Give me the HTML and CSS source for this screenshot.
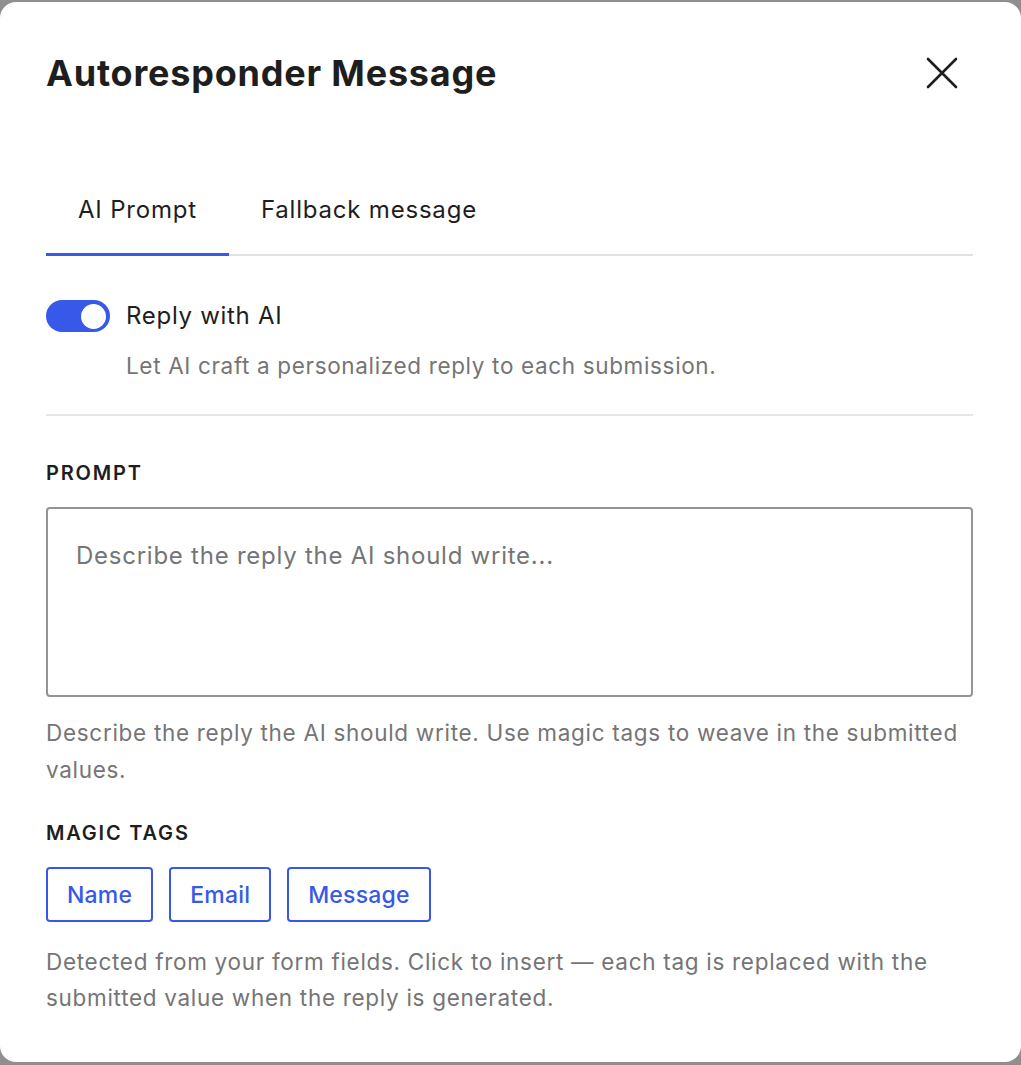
FILE: index.html
```html
<!DOCTYPE html>
<html lang="en">
<head>
<meta charset="utf-8">
<title>Autoresponder Message</title>
<link rel="stylesheet" href="styles.css">
</head>
<body>
<div class="modal" role="dialog" aria-labelledby="modal-title">
  <div class="modal-header">
    <h1 id="modal-title" class="modal-title">Autoresponder Message</h1>
    <button class="close-btn" aria-label="Close">
      <svg width="34" height="34" viewBox="0 0 34 34" aria-hidden="true">
        <path d="M3 3 L31 31 M31 3 L3 31" stroke="#1e1e1e" stroke-width="2.6" stroke-linecap="round" fill="none"/>
      </svg>
    </button>
  </div>

  <div class="tabs" role="tablist">
    <button class="tab is-active" role="tab" aria-selected="true">AI Prompt</button>
    <button class="tab" role="tab" aria-selected="false">Fallback message</button>
  </div>

  <div class="toggle-row">
    <span class="toggle is-on" aria-hidden="true"><span class="toggle-thumb"></span></span>
    <span class="toggle-label">Reply with AI</span>
  </div>
  <p class="toggle-help">Let AI craft a personalized reply to each submission.</p>

  <hr class="divider">

  <div class="section-label">PROMPT</div>
  <div class="textarea">
    <span class="placeholder">Describe the reply the AI should write...</span>
  </div>
  <p class="help">Describe the reply the AI should write. Use magic tags to weave in the submitted values.</p>

  <div class="section-label tags-label">MAGIC TAGS</div>
  <div class="tag-list">
    <button class="tag">Name</button>
    <button class="tag">Email</button>
    <button class="tag">Message</button>
  </div>
  <p class="help footer-help">Detected from your form fields. Click to insert — each tag is replaced with the submitted value when the reply is generated.</p>
</div>
</body>
</html>
```

FILE: styles.css
```css
* {
  box-sizing: border-box;
}

html, body {
  margin: 0;
  padding: 0;
}

body {
  background: #8f8f8f;
  font-family: "Inter", "Liberation Sans", sans-serif;
  color: #1e1e1e;
  height: 1065px;
  overflow: hidden;
}

.modal {
  margin-top: 2px;
  height: 1060px;
  background: #ffffff;
  border-radius: 16px;
  padding: 0 48px 0 46px;
}

/* Header */
.modal-header {
  display: flex;
  align-items: center;
  justify-content: space-between;
  padding-top: 51px;
}

.modal-title {
  margin: 0;
  font-size: 36px;
  line-height: 40px;
  font-weight: 700;
  letter-spacing: 0.8px;
}

.close-btn {
  border: 0;
  background: none;
  padding: 0;
  margin-right: 14px;
  width: 34px;
  height: 34px;
  cursor: pointer;
}

/* Tabs */
.tabs {
  display: flex;
  margin-top: 75px;
  box-shadow: inset 0 -2px 0 #e2e2e2;
}

.tab {
  border: 0;
  background: none;
  font-family: inherit;
  font-size: 24px;
  letter-spacing: 0.8px;
  line-height: 30px;
  color: #1e1e1e;
  padding: 27px 32px 31px;
  cursor: pointer;
}

.tab.is-active {
  box-shadow: inset 0 -3px 0 #3858e9;
}

/* Toggle */
.toggle-row {
  display: flex;
  align-items: center;
  gap: 16px;
  margin-top: 44px;
}

.toggle {
  width: 64px;
  height: 32px;
  border-radius: 16px;
  background: #3858e9;
  display: flex;
  align-items: center;
  justify-content: flex-end;
  padding: 0 4px;
}

.toggle-thumb {
  width: 25px;
  height: 25px;
  border-radius: 50%;
  background: #ffffff;
}

.toggle-label {
  font-size: 24px;
  letter-spacing: 0.7px;
  line-height: 32px;
}

.toggle-help {
  margin: 19px 0 0 80px;
  font-size: 22.5px;
  letter-spacing: 0.65px;
  line-height: 30px;
  color: #757575;
}

.divider {
  border: 0;
  height: 2px;
  background: #e6e6e6;
  margin: 33px 0 0;
}

/* Fields */
.section-label {
  margin-top: 45px;
  font-size: 20px;
  line-height: 24px;
  font-weight: 600;
  letter-spacing: 1.8px;
}

.textarea {
  margin-top: 22px;
  height: 190px;
  border: 2px solid #949494;
  border-radius: 4px;
  padding: 32px 28px;
}

.placeholder {
  font-size: 24px;
  letter-spacing: 0.75px;
  line-height: 30px;
  color: #757575;
}

.help {
  margin: 17px 0 0;
  font-size: 22.5px;
  letter-spacing: 0.7px;
  line-height: 37px;
  color: #757575;
}

.tags-label {
  margin-top: 33px;
}

.tag-list {
  display: flex;
  gap: 16px;
  margin-top: 22px;
}

.tag {
  height: 55px;
  padding: 0 19px;
  border: 2px solid #3858e9;
  border-radius: 4px;
  background: #ffffff;
  color: #3858e9;
  font-family: inherit;
  font-size: 23px;
  letter-spacing: 0.2px;
  font-weight: 500;
  cursor: pointer;
}

.footer-help {
  margin-top: 22px;
  line-height: 36px;
}
```
